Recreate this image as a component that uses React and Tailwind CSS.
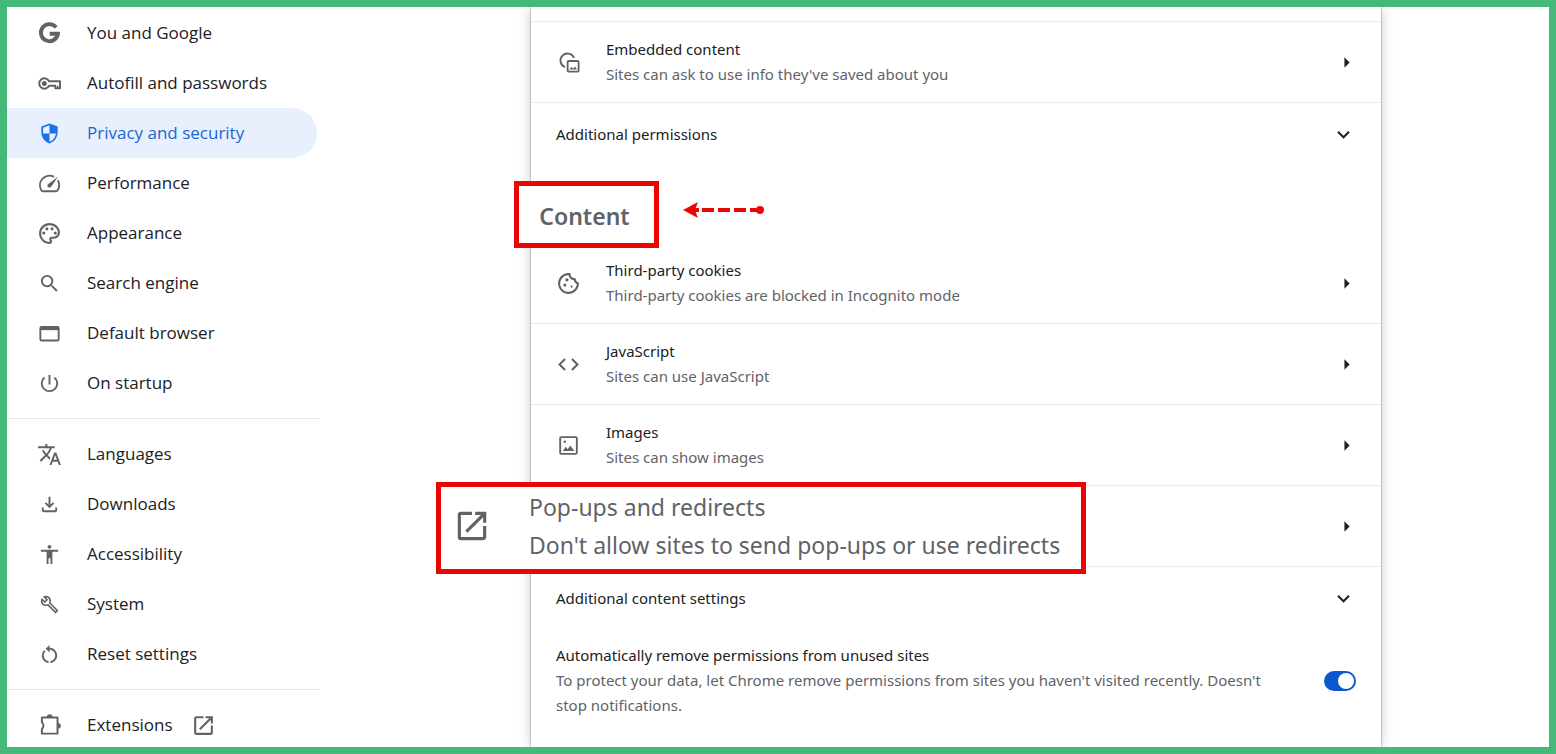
import React, { useState } from 'react';
import {
  MdOutlinePalette,
  MdSearch,
  MdPowerSettingsNew,
  MdTranslate,
  MdOutlineFileDownload,
  MdAccessibility,
  MdOutlineBuild,
  MdRestartAlt,
  MdOpenInNew,
  MdOutlineCookie,
  MdCode,
  MdArrowRight,
  MdExpandMore,
} from 'react-icons/md';

const GoogleIcon = (props) => (
  <svg viewBox="0 0 24 24" fill="none" stroke="currentColor" strokeWidth="3.7" {...props}>
    <path d="M18.4 6.1A8.2 8.2 0 1 0 20.1 12.2H12.2" />
  </svg>
);

const KeyIcon = (props) => (
  <svg viewBox="0 0 24 24" fill="none" stroke="currentColor" strokeWidth="1.9" strokeLinejoin="round" {...props}>
    <path d="M11.6 9.8H22.1V16.6H17.6V14.2H11.6A5 5 0 1 1 11.6 9.8Z" />
    <path d="M19.8 14v2.4" strokeWidth="1.3" />
    <circle cx="7" cy="12" r="2.4" fill="currentColor" stroke="none" />
  </svg>
);

const ShieldIcon = (props) => (
  <svg viewBox="0 0 24 24" fill="currentColor" {...props}>
    <path d="M12 1.5 3.5 4.7V11c0 5.2 3.6 9.8 8.5 11.5 4.9-1.7 8.5-6.3 8.5-11.5V4.7L12 1.5Zm0 10.4h6.7c-.5 3.9-3.1 7.4-6.7 8.7v-8.7H5.3V5.9L12 3.4v8.5Z" />
  </svg>
);

const GaugeIcon = (props) => (
  <svg viewBox="0 0 24 24" fill="none" stroke="currentColor" strokeWidth="1.8" {...props}>
    <path d="M16.3 5.6A9.2 9.2 0 0 0 4.1 18.4a1.8 1.8 0 0 0 1.6 1h12.6a1.8 1.8 0 0 0 1.6-1A9.2 9.2 0 0 0 20 8.900" />
    <path d="m20.3 5.5-6.9 9.9a2 2 0 1 1-2.9-2.8Z" fill="currentColor" stroke="none" />
  </svg>
);

const BrowserIcon = (props) => (
  <svg viewBox="0 0 24 24" fill="none" stroke="currentColor" strokeWidth="1.8" {...props}>
    <rect x="3.2" y="5.7" width="17.6" height="13" rx="1.2" />
    <path d="M3 7.2h18" strokeWidth="3.2" />
  </svg>
);

const PuzzleIcon = (props) => (
  <svg viewBox="0 0 24 24" fill="none" stroke="currentColor" strokeWidth="1.9" strokeLinejoin="round" {...props}>
    <path d="M4.7 4.4h15v15.4h-15v-4.4a4.4 4.4 0 0 0 0-6.6Z" />
    <path d="M9.4 3.9a2.8 2.8 0 0 1 5.6 0Zm10.8 5.6a2.7 2.7 0 0 1 0 5.4Z" fill="currentColor" stroke="none" />
  </svg>
);

const EmbeddedIcon = (props) => (
  <svg viewBox="0 0 24 24" fill="none" stroke="currentColor" strokeWidth="2" {...props}>
    <path d="M7.5 17.6A7.7 7.7 0 1 1 17.5 7.5" />
    <rect x="10.5" y="10.9" width="12" height="11.6" rx="1.2" />
    <path d="m12.4 20.3 2.4-3 1.7 2.1 1.9-2.4 2.6 3.3Z" fill="currentColor" stroke="none" />
  </svg>
);

const ImageIcon = (props) => (
  <svg viewBox="0 0 24 24" fill="none" stroke="currentColor" strokeWidth="1.8" {...props}>
    <rect x="4" y="4" width="16" height="16" rx="1" />
    <path d="m6.5 17.2 2.9-3.9 1.8 2.3 2.5-3.7 4 5.3Z" fill="currentColor" stroke="none" />
    <circle cx="8.4" cy="8.5" r="1.2" fill="currentColor" stroke="none" />
  </svg>
);

const navGroups = [
  [
    { label: 'You and Google', icon: GoogleIcon, size: 'size-[25px]' },
    { label: 'Autofill and passwords', icon: KeyIcon, size: 'size-[25px]' },
    { label: 'Privacy and security', icon: ShieldIcon, size: 'size-[23px]' },
    { label: 'Performance', icon: GaugeIcon, size: 'size-[25px]' },
    { label: 'Appearance', icon: MdOutlinePalette, size: 'size-[25px]' },
    { label: 'Search engine', icon: MdSearch, size: 'size-[23px]' },
    { label: 'Default browser', icon: BrowserIcon, size: 'size-[25px]' },
    { label: 'On startup', icon: MdPowerSettingsNew, size: 'size-[23px]' },
  ],
  [
    { label: 'Languages', icon: MdTranslate, size: 'size-[25px]' },
    { label: 'Downloads', icon: MdOutlineFileDownload, size: 'size-[23px]' },
    { label: 'Accessibility', icon: MdAccessibility, size: 'size-[23px]' },
    { label: 'System', icon: MdOutlineBuild, size: 'size-[19px]' },
    { label: 'Reset settings', icon: MdRestartAlt, size: 'size-[23px]' },
  ],
  [{ label: 'Extensions', icon: PuzzleIcon, size: 'size-[25px]', external: true }],
];

const contentRows = [
  {
    title: 'Third-party cookies',
    text: 'Third-party cookies are blocked in Incognito mode',
    icon: MdOutlineCookie,
    size: 'size-[25px]',
  },
  { title: 'JavaScript', text: 'Sites can use JavaScript', icon: MdCode, size: 'size-[25px]' },
  { title: 'Images', text: 'Sites can show images', icon: ImageIcon, size: 'size-[25px]' },
];

function NavItem({ item, active, onSelect }) {
  const Icon = item.icon;
  return (
    <a
      href="#"
      onClick={(e) => {
        e.preventDefault();
        onSelect(item.label);
      }}
      className={`flex h-[50px] items-center rounded-r-full pl-[30px] mr-[3px] ${
        active ? 'bg-[#e8f0fe] text-[#1967d2]' : 'text-[#202124]'
      }`}
    >
      <span className={`flex w-[25px] shrink-0 justify-center ${active ? 'text-[#1a73e8]' : 'text-[#5f6368]'}`}>
        <Icon className={item.size} />
      </span>
      <span className="ml-[25px] font-['Open_Sans','Segoe_UI',sans-serif] text-[17px] font-medium">{item.label}</span>
      {item.external && <MdOpenInNew className="ml-[18px] size-[25px] text-[#5f6368]" />}
    </a>
  );
}

function SettingRow({ row }) {
  const Icon = row.icon;
  return (
    <li>
      <button type="button" className="flex h-20 w-full items-center px-[25px] text-left">
        <span className="flex w-[25px] shrink-0 justify-center text-[#5f6368]">
          <Icon className={row.size} />
        </span>
        <span className="ml-[25px] flex-1 leading-[25px]">
          <span className="block">{row.title}</span>
          <span className="block text-[#5f6368]">{row.text}</span>
        </span>
        <MdArrowRight className="-mr-[3px] size-[25px]" />
      </button>
    </li>
  );
}

function ExpandRow({ label }) {
  return (
    <li>
      <button type="button" className="flex h-[62px] w-full items-center justify-between px-[25px] text-left">
        <span>{label}</span>
        <MdExpandMore className="size-[25px]" />
      </button>
    </li>
  );
}

function App() {
  const [selected, setSelected] = useState('Privacy and security');
  const [autoRemove, setAutoRemove] = useState(true);

  return (
    <div className="flex h-screen overflow-hidden border-[7px] border-[#45b978] bg-white font-['Noto_Sans','Segoe_UI',sans-serif] text-[#202124]">
      <nav className="w-[313px] shrink-0 pt-px">
        {navGroups.map((group, i) => (
          <div key={i} className={i > 0 ? 'mt-2.5 border-t border-[#e8e8e8] pt-2.5' : ''}>
            {group.map((item) => (
              <NavItem key={item.label} item={item} active={item.label === selected} onSelect={setSelected} />
            ))}
          </div>
        ))}
      </nav>

      <main className="flex flex-1 justify-center pl-[43px] text-[15px]">
        <div className="w-full max-w-[850px] pt-3.5 shadow-[0_0_2px_rgba(0,0,0,0.45),0_0_12px_rgba(0,0,0,0.2)]">
          <ul className="divide-y divide-[#ebebeb] border-t border-[#ebebeb]">
            <SettingRow
              row={{
                title: 'Embedded content',
                text: "Sites can ask to use info they've saved about you",
                icon: EmbeddedIcon,
                size: 'size-[22px]',
              }}
            />
            <ExpandRow label="Additional permissions" />
          </ul>

          <div className="relative h-[78px]">
            <h2 className="absolute top-4 -left-[17px] flex h-[67px] w-[145px] items-center justify-center border-5 border-[#eb0606] bg-white pt-1 pr-1 text-[23px] font-semibold text-[#5f6368]">
              Content
            </h2>
            <svg viewBox="0 0 82 16" className="absolute top-[37px] left-[152px] h-4 w-[82px] fill-[#eb0606]">
              <path d="M0 8 15 0 12 8 15 16ZM12 6h4v4h-4ZM19 6h12v4H19ZM35 6h12v4H35ZM51 6h12v4H51ZM67 6h10v4H67Z" />
              <circle cx="77" cy="8" r="4" />
            </svg>
          </div>

          <ul className="divide-y divide-[#ebebeb]">
            {contentRows.map((row) => (
              <SettingRow key={row.title} row={row} />
            ))}
            <li>
              <button type="button" className="relative flex h-20 w-full items-center justify-end px-[25px] text-left">
                {/* enlarged callout over the row */}
                <span className="absolute -top-1 -left-[95px] flex h-[92px] w-[650px] items-center border-5 border-[#eb0606] bg-white pb-1 pl-3 text-[#5f6368]">
                  <MdOpenInNew className="size-[38px] shrink-0" />
                  <span className="ml-[38px] text-[23px] leading-[38px] whitespace-nowrap">
                    <span className="block">Pop-ups and redirects</span>
                    <span className="block">Don't allow sites to send pop-ups or use redirects</span>
                  </span>
                </span>
                <MdArrowRight className="-mr-[3px] size-[25px]" />
              </button>
            </li>
            <ExpandRow label="Additional content settings" />
          </ul>

          <label className="flex items-center px-[25px] pt-3.5 pb-8 leading-[25px]">
            <span className="flex-1 pr-10">
              <span className="block">Automatically remove permissions from unused sites</span>
              <span className="block text-[#5f6368]">
                To protect your data, let Chrome remove permissions from sites you haven't visited recently. Doesn't stop
                notifications.
              </span>
            </span>
            <input
              type="checkbox"
              role="switch"
              checked={autoRemove}
              onChange={(e) => setAutoRemove(e.target.checked)}
              className="flex h-5 w-8 shrink-0 appearance-none items-center rounded-full bg-[#c4c7c5] px-0.5 before:h-4 before:w-4 before:rounded-full before:bg-white checked:justify-end checked:bg-[#0b57d0]"
            />
          </label>
        </div>
      </main>
    </div>
  );
}

export default App;
